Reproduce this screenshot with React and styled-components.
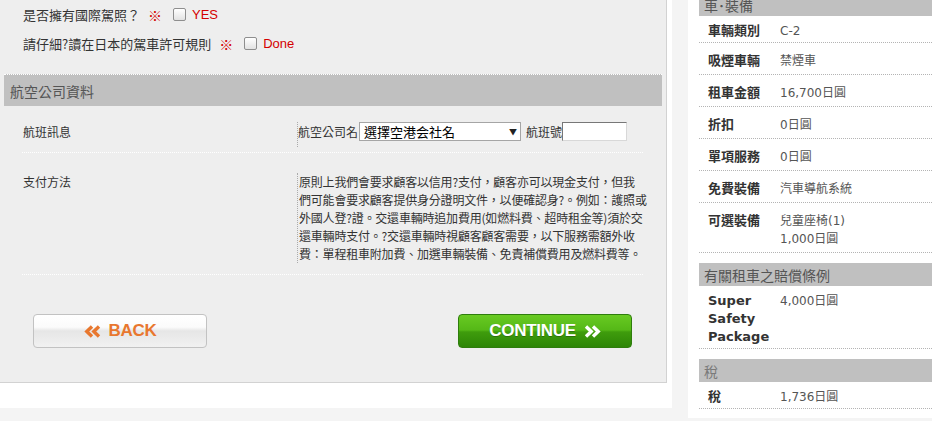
import React from "react";
import styled, { createGlobalStyle } from "styled-components";

const GlobalStyle = createGlobalStyle`
  html, body {
    margin: 0;
    padding: 0;
    background: #f4f4f4;
  }
  body {
    font-family: "Noto Sans CJK TC", "DejaVu Sans", sans-serif;
    color: #333;
    overflow: hidden;
  }
`;

const Page = styled.div`
  display: flex;
  align-items: flex-start;
  gap: 16px;
  width: 932px;
  height: 421px;
  overflow: hidden;
`;

const MainWrap = styled.div`
  width: 672px;
  background: #fff;
  padding: 0 5px 25px 0;
  box-sizing: border-box;
`;

const Panel = styled.div`
  background: #eeeeee;
  border-right: 1px solid #d2d2d2;
  border-bottom: 1px solid #d2d2d2;
`;

const Questions = styled.div`
  padding: 0 0 0 23px;
`;

const QRow = styled.div`
  display: flex;
  align-items: center;
  height: 29px;
  font-size: 13px;
  color: #333;
`;

const Mark = styled.span`
  color: #d40000;
  font-size: 14px;
  margin: 0 11px 0 8px;
`;

const CheckBox = styled.span`
  display: inline-block;
  width: 11px;
  height: 11px;
  border: 1px solid #8e8e8e;
  border-radius: 2px;
  background: linear-gradient(#ffffff, #e2e2e2);
  margin-right: 6px;
`;

const RedLabel = styled.span`
  color: #d40000;
  font-family: "Liberation Sans", Arial, sans-serif;
  font-size: 13px;
`;

const SectionBar = styled.div`
  margin: 16px 4px 0;
  border-top: 1px dotted #fff;
  height: 31px;
  background: #c0c0c0;
  display: flex;
  align-items: center;
  padding-left: 6px;
  font-size: 14px;
  color: #555;
`;

const FormTable = styled.div`
  margin: 0 23px 0 22px;
`;

const FormRow = styled.div`
  display: flex;
  align-items: flex-start;
  border-bottom: 1px dotted #ffffff;
  padding: ${(p) => p.$pad};
`;

const FormLabel = styled.div`
  width: 275px;
  flex-shrink: 0;
  padding-left: 1px;
  box-sizing: border-box;
  font-size: 12px;
  line-height: ${(p) => p.$lh || "18px"};
  color: #333;
`;

const FormCell = styled.div`
  flex: 1;
  border-left: 1px dotted #aaaaaa;
  min-height: ${(p) => p.$min || "0"};
  font-size: 12px;
  color: #333;
`;

const Inline = styled.div`
  display: flex;
  align-items: center;
  height: 19px;
  white-space: nowrap;
`;

const SelectBox = styled.div`
  display: flex;
  align-items: center;
  justify-content: space-between;
  width: 153px;
  height: 17px;
  border: 1px solid #a5a5a5;
  background: #fff;
  margin: 0 5px 0 1px;
  padding: 0 3px 0 4px;
  box-sizing: content-box;
  font-size: 13px;
  color: #000;
`;

const Caret = styled.span`
  font-size: 8px;
  color: #222;
`;

const TextInput = styled.span`
  display: inline-block;
  width: 63px;
  height: 17px;
  background: #fff;
  border-top: 1px solid #777;
  border-left: 1px solid #777;
  border-right: 1px solid #d8d8d8;
  border-bottom: 1px solid #d8d8d8;
`;

const Para = styled.p`
  margin: 0;
  padding-left: 1px;
  line-height: 18px;
`;

const ParaLine = styled.span`
  display: block;
  white-space: nowrap;
  letter-spacing: -0.2px;
`;

const ButtonRow = styled.div`
  display: flex;
  justify-content: space-between;
  padding: 39px 34px 34px 33px;
`;

const BaseButton = styled.button`
  width: 174px;
  height: 34px;
  padding: 0;
  display: flex;
  align-items: center;
  justify-content: center;
  gap: 8px;
  font-family: "Liberation Sans", Arial, sans-serif;
  font-weight: bold;
  font-size: 17px;
  letter-spacing: -0.3px;
  cursor: pointer;
`;

const BackButton = styled(BaseButton)`
  border: 1px solid #c2c2c2;
  border-radius: 4px;
  background: linear-gradient(#ffffff 0%, #fbfbfb 38%, #e6e6e6 50%, #f1f1f1 100%);
  color: #e8772e;
`;

const ContinueButton = styled(BaseButton)`
  border: 1px solid #2e7d0c;
  border-radius: 4px;
  background: linear-gradient(#68ca22 0%, #55b817 47%, #3f9c0d 53%, #2d8606 100%);
  color: #fff;
  text-shadow: 0 1px 0 rgba(0, 0, 0, 0.25);
`;

const Sidebar = styled.aside`
  width: 244px;
  margin-top: -7px;
  background: #fff;
  padding: 0 0 9px 11px;
  box-sizing: border-box;
`;

const SideHeader = styled.div`
  height: 23px;
  background: #c0c0c0;
  display: flex;
  align-items: center;
  padding-left: 5px;
  margin-top: ${(p) => (p.$first ? "0" : "10px")};
  font-size: 14px;
  color: ${(p) => (p.$muted ? "#7a7a7a" : "#555")};
`;

const SideGroup = styled.div``;

const SideRow = styled.div`
  display: flex;
  border-bottom: 1px dotted #b4b4b4;
  padding: 9px 0 4px;
  &:first-child {
    padding: 6px 0 2px;
  }
`;

const SideLabel = styled.div`
  width: 81px;
  flex-shrink: 0;
  padding-left: 9px;
  box-sizing: border-box;
  font-family: "DejaVu Sans", "Noto Sans CJK TC", sans-serif;
  font-weight: bold;
  font-size: 13px;
  line-height: 18px;
  color: #333;
`;

const SideValue = styled.div`
  flex: 1;
  font-family: "DejaVu Sans", "Noto Sans CJK TC", sans-serif;
  font-size: 12px;
  line-height: 18px;
  color: #555;
`;

const Line = styled.div``;

const Chevrons = ({ dir, color }) => (
  <svg width="17" height="13" viewBox="0 0 17 13" aria-hidden="true">
    {dir === "left" ? (
      <g fill="none" stroke={color} strokeWidth="3.4" strokeLinejoin="miter">
        <polyline points="8,1.5 2.8,6.5 8,11.5" />
        <polyline points="15,1.5 9.8,6.5 15,11.5" />
      </g>
    ) : (
      <g fill="none" stroke={color} strokeWidth="3.4" strokeLinejoin="miter">
        <polyline points="2,1.5 7.2,6.5 2,11.5" />
        <polyline points="9,1.5 14.2,6.5 9,11.5" />
      </g>
    )}
  </svg>
);

const paymentLines = [
  "原則上我們會要求顧客以信用?支付，顧客亦可以現金支付，但我",
  "們可能會要求顧客提供身分證明文件，以便確認身?。例如：護照或",
  "外國人登?證。交還車輛時追加費用(如燃料費、超時租金等)須於交",
  "還車輛時支付。?交還車輛時視顧客顧客需要，以下服務需額外收",
  "費：單程租車附加費、加選車輛裝備、免責補償費用及燃料費等。",
];

const carRows = [
  { label: "車輛類別", value: ["C-2"] },
  { label: "吸煙車輛", value: ["禁煙車"] },
  { label: "租車金額", value: ["16,700日圓"] },
  { label: "折扣", value: ["0日圓"] },
  { label: "單項服務", value: ["0日圓"] },
  { label: "免費裝備", value: ["汽車導航系統"] },
  { label: "可選裝備", value: ["兒童座椅(1)", "1,000日圓"] },
];

const SideSection = ({ title, rows, first, muted }) => (
  <>
    <SideHeader $first={first} $muted={muted}>
      {title}
    </SideHeader>
    <SideGroup>
      {rows.map((r) => (
        <SideRow key={r.label}>
          <SideLabel>{r.label}</SideLabel>
          <SideValue>
            {r.value.map((v) => (
              <Line key={v}>{v}</Line>
            ))}
          </SideValue>
        </SideRow>
      ))}
    </SideGroup>
  </>
);

export default function App() {
  return (
    <>
      <GlobalStyle />
      <Page>
        <MainWrap>
          <Panel>
            <Questions>
              <QRow>
                是否擁有國際駕照？
                <Mark>※</Mark>
                <CheckBox />
                <RedLabel>YES</RedLabel>
              </QRow>
              <QRow>
                請仔細?讀在日本的駕車許可規則
                <Mark>※</Mark>
                <CheckBox />
                <RedLabel>Done</RedLabel>
              </QRow>
            </Questions>

            <SectionBar>航空公司資料</SectionBar>

            <FormTable>
              <FormRow $pad="16px 0 5px">
                <FormLabel $lh="19px">航班訊息</FormLabel>
                <FormCell $min="25px">
                  <Inline>
                    航空公司名
                    <SelectBox>
                      選擇空港会社名
                      <Caret>▼</Caret>
                    </SelectBox>
                    航班號
                    <TextInput />
                  </Inline>
                </FormCell>
              </FormRow>
              <FormRow $pad="20px 0 11px">
                <FormLabel>支付方法</FormLabel>
                <FormCell>
                  <Para>
                    {paymentLines.map((l) => (
                      <ParaLine key={l}>{l}</ParaLine>
                    ))}
                  </Para>
                </FormCell>
              </FormRow>
            </FormTable>

            <ButtonRow>
              <BackButton type="button">
                <Chevrons dir="left" color="#e8772e" />
                BACK
              </BackButton>
              <ContinueButton type="button">
                CONTINUE
                <Chevrons dir="right" color="#ffffff" />
              </ContinueButton>
            </ButtonRow>
          </Panel>
        </MainWrap>

        <Sidebar>
          <SideSection title="車･裝備" rows={carRows} first />
          <SideSection
            title="有關租車之賠償條例"
            rows={[{ label: "Super Safety Package", value: ["4,000日圓"] }]}
          />
          <SideSection title="稅" rows={[{ label: "稅", value: ["1,736日圓"] }]} muted />
        </Sidebar>
      </Page>
    </>
  );
}
